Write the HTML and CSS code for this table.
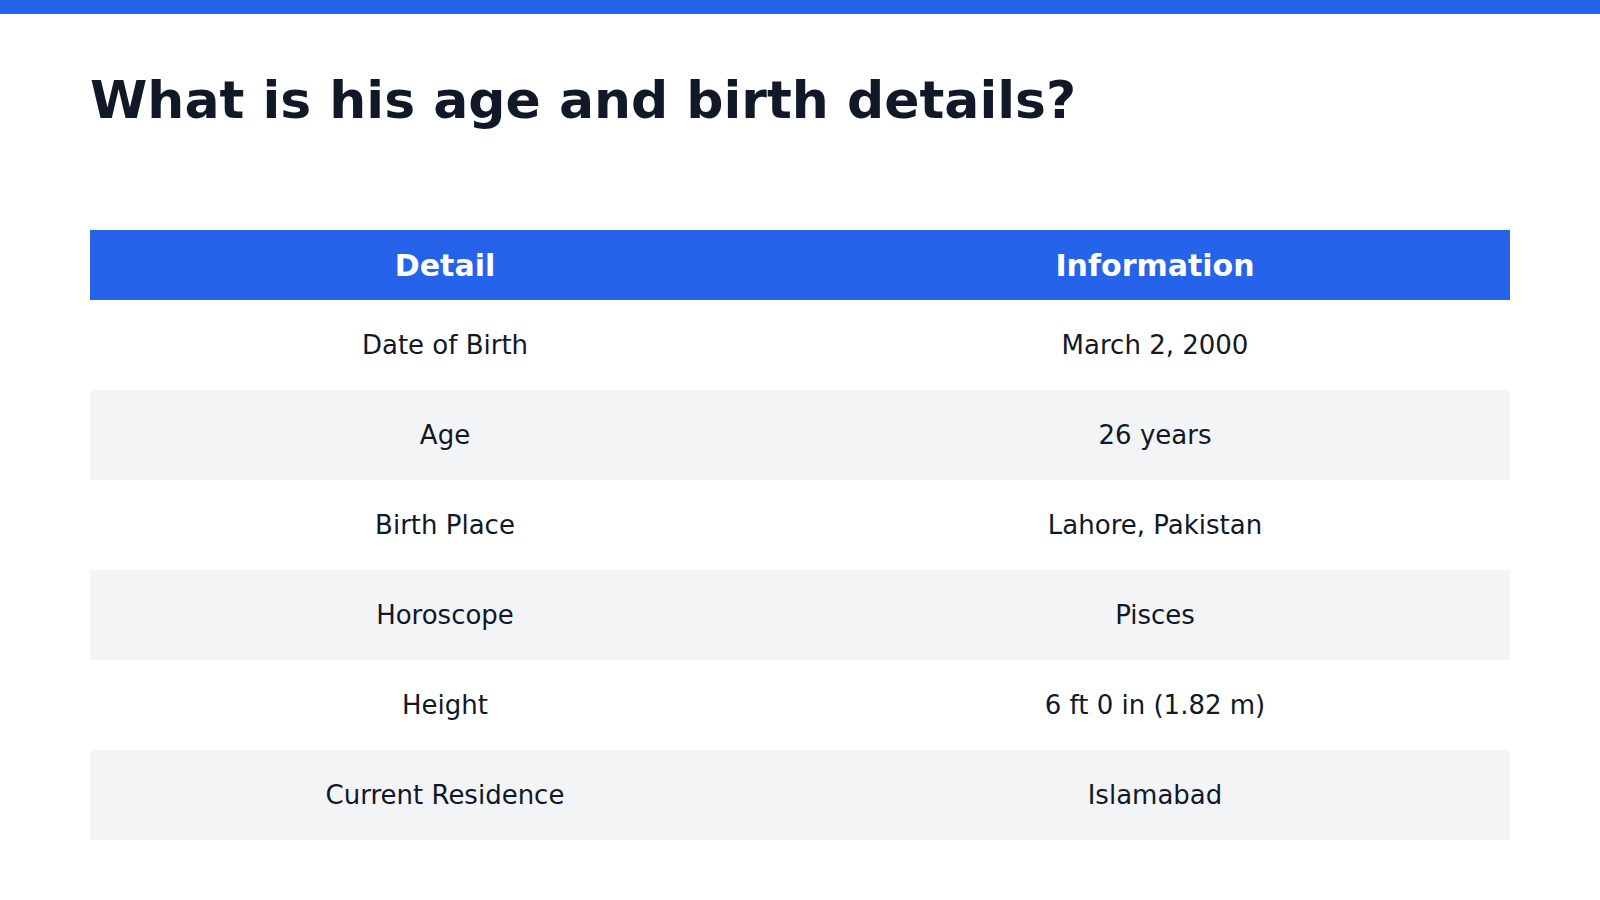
FILE: index.html
```html
<!DOCTYPE html>
<html lang="en">
<head>
<meta charset="utf-8">
<title>Age and birth details</title>
<link rel="stylesheet" href="styles.css">
</head>
<body>
<div class="topbar"></div>
<main class="content">
  <h1 class="title">What is his age and birth details?</h1>
  <table class="details">
    <thead>
      <tr><th>Detail</th><th>Information</th></tr>
    </thead>
    <tbody>
      <tr><td>Date of Birth</td><td>March 2, 2000</td></tr>
      <tr><td>Age</td><td>26 years</td></tr>
      <tr><td>Birth Place</td><td>Lahore, Pakistan</td></tr>
      <tr><td>Horoscope</td><td>Pisces</td></tr>
      <tr><td>Height</td><td>6 ft 0 in (1.82 m)</td></tr>
      <tr><td>Current Residence</td><td>Islamabad</td></tr>
    </tbody>
  </table>
</main>
</body>
</html>
```
FILE: styles.css
```css
html, body {
  margin: 0;
  padding: 0;
  background: #ffffff;
}
body {
  font-family: "DejaVu Sans", "Noto Sans", sans-serif;
  color: #111827;
}
.topbar {
  height: 14px;
  background: #2563eb;
}
.content {
  padding: 56px 90px 0 90px;
}
.title {
  margin: 0;
  font-size: 52px;
  font-weight: 700;
  line-height: 60px;
  color: #111827;
}
.details {
  margin-top: 100px;
  width: 100%;
  border-collapse: collapse;
  table-layout: fixed;
}
.details th {
  height: 70px;
  padding: 0;
  background: #2563eb;
  color: #ffffff;
  font-size: 30px;
  font-weight: 700;
  text-align: center;
  vertical-align: middle;
}
.details td {
  height: 90px;
  padding: 0;
  font-size: 26px;
  text-align: center;
  vertical-align: middle;
  color: #111827;
}
.details tbody tr:nth-child(even) td {
  background: #f3f4f6;
}
```
